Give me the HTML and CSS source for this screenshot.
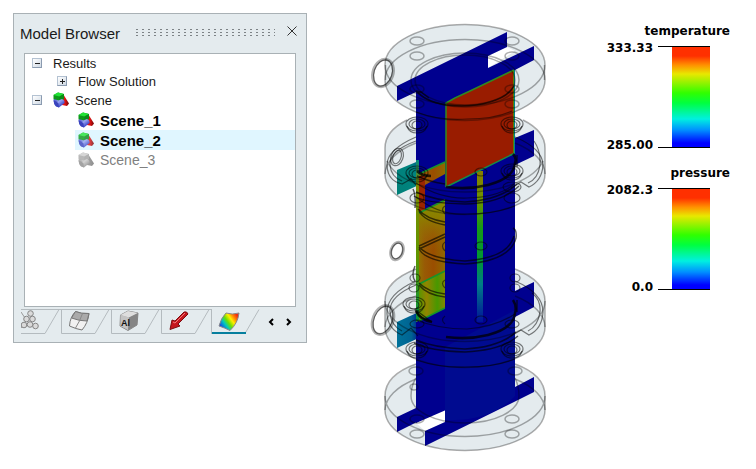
FILE: index.html
```
<!DOCTYPE html>
<html lang="en">
<head>
<meta charset="utf-8">
<title>Model Browser</title>
<link rel="stylesheet" href="styles.css">
</head>
<body>
<svg class="defs" aria-hidden="true">
  <defs>
    <linearGradient id="cyl" x1="0" y1="0" x2="1" y2="1"><stop offset="0" stop-color="#3a44c8"/><stop offset=".4" stop-color="#98a4f0"/><stop offset=".7" stop-color="#4a55cf"/><stop offset="1" stop-color="#2a33b0"/></linearGradient>
    <linearGradient id="cone" x1="0" x2="1"><stop offset="0" stop-color="#f01818"/><stop offset=".5" stop-color="#e01010"/><stop offset="1" stop-color="#6c0808"/></linearGradient>
  </defs>
  <symbol id="scene" viewBox="0 0 16 16">
    <path d="M11 3.500 16 11.500 14 14 9 13 8 6z" fill="url(#cone)"/>
    <path d="M.5 3 5 .5 11 2 11 7 6 9 .5 7.500z" fill="#0c9a1a"/>
    <path d="M.5 3 5 .5 11 2 6.500 4.500z" fill="#22e436"/>
    <path d="M6.500 4.500 11 2 11 7 6 9z" fill="#0c8a18"/>
    <path d="M.5 8.500Q1 6.500 3 7.500L5 8.500 9 7Q12 8 11.500 11L6 15.500 2 13.500z" fill="url(#cyl)"/>
    <path d="M.5 8.500Q4 9 5.500 11.500L6 15.500 3 14.500Q.5 12 .5 8.500z" fill="#3a43bd"/>
  </symbol>
</svg>

<main class="page">
  <section class="panel" aria-label="Model Browser">
    <header class="panel-head">
      <h1>Model Browser</h1>
      <span class="grip"></span>
      <button class="close" aria-label="Close"><svg viewBox="0 0 10 10"><path d="M.5.5 9.500 9.500M9.500.5.5 9.500"/></svg></button>
    </header>

    <ul class="tree">
      <li>
        <div class="row"><button class="toggle minus" aria-label="Collapse Results"></button><span>Results</span></div>
        <ul>
          <li class="row"><button class="toggle plus" aria-label="Expand Flow Solution"></button><span>Flow Solution</span></li>
        </ul>
      </li>
      <li>
        <div class="row tall"><button class="toggle minus" aria-label="Collapse Scene"></button><span class="entry"><svg class="icon"><use href="#scene"/></svg>Scene</span></div>
        <ul class="scenes">
          <li class="entry strong"><svg class="icon"><use href="#scene"/></svg>Scene_1</li>
          <li class="entry strong selected"><svg class="icon"><use href="#scene"/></svg>Scene_2</li>
          <li class="entry muted"><svg class="icon"><use href="#scene"/></svg>Scene_3</li>
        </ul>
      </li>
    </ul>

    <nav class="tabs">
      <button class="tab first" aria-label="Particles"><svg viewBox="10 0 40 25">
        <path class="edge" d="M10 .5H50M10 24.500H34L48 .5"/>
        <path d="M10 3 14 9M10 19 14 14" stroke="#999"/>
        <g fill="#dadada" stroke="#858585"><circle cx="19.500" cy="4.500" r="2.800"/><circle cx="15.500" cy="10" r="2.800"/><circle cx="21.500" cy="10" r="2.800"/><circle cx="13" cy="16" r="2.800"/><circle cx="19" cy="15.500" r="2.800"/><circle cx="24.500" cy="17" r="2.800"/></g>
      </svg></button>
      <button class="tab" aria-label="Mesh"><svg viewBox="0 0 50 25">
        <path class="edge" d="M0 .5H50M.5 0V24.500H34L48 .5"/>
        <path d="M14.500 2.500Q20 5 28 4.500Q27 14 21 21Q15 20 8.500 17Q9 8 14.500 2.500z" fill="#f1f1f1" stroke="#777"/>
        <path d="M14.500 2.500Q20 5 28 4.500L26 12Q18 12 10.500 9z" fill="#aaa" stroke="#777"/>
        <path d="M21.500 4.500Q19 12 14.500 19" fill="none" stroke="#888"/>
      </svg></button>
      <button class="tab" aria-label="Materials"><svg viewBox="0 0 50 25">
        <path class="edge" d="M0 .5H50M.5 0V24.500H34L48 .5"/>
        <path d="M9.500 6 17 2 27 4 26 16 17 21.500 9 17z" fill="#aaa" stroke="#888"/>
        <path d="M9.500 6 17 2 27 4 18 8.500z" fill="#dedede"/>
        <path d="M9.500 6 18 8.500 17 21 9.500 17z" fill="#c3c3c3"/>
        <path d="M18 8.500 27 4 26 16 17 21z" fill="#858585"/>
        <text class="cube-text" x="10" y="17">Al</text>
      </svg></button>
      <button class="tab" aria-label="Vectors"><svg viewBox="0 0 50 25">
        <path class="edge" d="M0 .5H50M.5 0V24.500H34L48 .5"/>
        <path d="M9 20.500 11 11 14 12 23 3Q26 2 27 5L17 15 19 17z" fill="#c5161d" stroke="#7d0c10"/>
        <path d="M12 13 14 14 24 4" fill="none" stroke="#f2777a"/>
      </svg></button>
      <button class="tab" aria-label="Contours"><svg viewBox="0 0 50 25">
        <defs><linearGradient id="rain" gradientUnits="userSpaceOnUse" x1="28" y1="6" x2="10" y2="19"><stop offset=".08" stop-color="#f02b10"/><stop offset=".25" stop-color="#ff8c00"/><stop offset=".4" stop-color="#ffee00"/><stop offset=".58" stop-color="#6ee000"/><stop offset=".75" stop-color="#00c8c0"/><stop offset="1" stop-color="#1735e8"/></linearGradient></defs>
        <path class="edge" d="M.5 0V25M34 24.500 48 .5"/>
        <path class="active-line" d="M1 24H35"/>
        <path d="M15 4Q21 6 28 4Q27 14 19 21.500Q14 19 8 17Q10 9 15 4z" fill="url(#rain)" stroke="#888"/>
      </svg></button>
      <button class="step" aria-label="Previous tabs"><svg viewBox="0 0 6 8"><path d="M5 1 2 4 5 7"/></svg></button>
      <button class="step" aria-label="Next tabs"><svg viewBox="0 0 6 8"><path d="M1 1 4 4 1 7"/></svg></button>
    </nav>
  </section>

  <figure class="view">
    <svg class="model" viewBox="370 15 190 445" role="img" aria-label="Flow model with temperature and pressure planes">
      <defs>
        <linearGradient id="streak" x1="0" y1="0" x2="0" y2="1"><stop offset="0" stop-color="#877f00"/><stop offset=".2" stop-color="#6b9400"/><stop offset=".38" stop-color="#169a18"/><stop offset=".6" stop-color="#009638"/><stop offset=".75" stop-color="#007d86"/><stop offset="1" stop-color="#00129a"/></linearGradient>
        <linearGradient id="orange"><stop offset="0" stop-color="#8f7e00"/><stop offset=".3" stop-color="#985a05"/><stop offset=".6" stop-color="#9a4e00"/><stop offset="1" stop-color="#906800"/></linearGradient>
        <linearGradient id="fade" x1="0" y1="0" x2="0" y2="1"><stop offset="0" stop-color="#859000"/><stop offset=".35" stop-color="#8d7d00"/><stop offset="1" stop-color="#98600a" stop-opacity="0"/></linearGradient>
        <linearGradient id="green"><stop offset="0" stop-color="#5a9500"/><stop offset=".3" stop-color="#928500"/><stop offset=".7" stop-color="#489800"/><stop offset="1" stop-color="#808800"/></linearGradient>
        <linearGradient id="rim" x1="0" y1="0" x2="0" y2="1"><stop offset="0" stop-color="#008a80"/><stop offset=".15" stop-color="#808c00"/><stop offset=".6" stop-color="#5f9600"/><stop offset="1" stop-color="#009440"/></linearGradient>
        <linearGradient id="teal" x1="0" y1="1" x2="1" y2="0"><stop offset="0" stop-color="#008078"/><stop offset=".7" stop-color="#008480"/><stop offset="1" stop-color="#004f92"/></linearGradient>
        <linearGradient id="lowteal"><stop offset="0" stop-color="#00729a"/><stop offset=".6" stop-color="#006392"/><stop offset="1" stop-color="#000d8e"/></linearGradient>
        <g id="holes"><ellipse cx="417" cy="41" rx="7" ry="4"/><ellipse cx="512" cy="41" rx="7" ry="4"/><ellipse cx="417" cy="56" rx="7" ry="4"/><ellipse cx="512" cy="56" rx="7" ry="4"/><ellipse cx="417" cy="89" rx="7" ry="4"/><ellipse cx="512" cy="89" rx="7" ry="4"/><ellipse cx="417" cy="104" rx="7" ry="4"/><ellipse cx="512" cy="104" rx="7" ry="4"/></g>
        <g id="bolt"><ellipse rx="11" ry="7"/><ellipse rx="8" ry="5"/><ellipse rx="5" ry="4" cy="1"/><path d="M-10 2Q-8 9 0 9Q8 9 10 2"/></g>
      </defs>

      <g class="body">
        <path d="M385 65a80 40.500 0 0 1 160 0v15a80 40.500 0 0 1-160 0z"/>
        <path d="M385 148a80 40.500 0 0 1 160 0v26a80 40.500 0 0 1-160 0z"/>
        <path d="M385 301a80 40.500 0 0 1 160 0v26a80 40.500 0 0 1-160 0z"/>
        <path d="M385 396a80 40.500 0 0 1 160 0v14a80 40.500 0 0 1-160 0z"/>
      </g>
      <path d="M488 56 507 47 515 51 488 68zM416 423 445 408V422L425 431z" fill="#fff"/>

      <path d="M397 170 421 160V184L397 195z" fill="url(#teal)"/>
      <path d="M397 322 421 311V337L397 348z" fill="url(#lowteal)"/>
      <path d="M397 417 416 408 445 400V408L397 432z" fill="#00008f"/>
      <path d="M397 86 507 32V47L488 56V68L534 46V60L515 70 446 104V170H416V92L397 101z" fill="#00008f"/>
      <path d="M416 95H446V410L416 423z" fill="#00008f"/>
      <path d="M416 176 445 162V308L416 322z" fill="url(#orange)"/>
      <path d="M418 176H425V209L418 212z" fill="#9b2600"/>
      <path d="M419 213 445 200V250H419z" fill="url(#fade)"/>
      <path d="M419 284 445 272V308L419 321z" fill="url(#green)"/>
      <path d="M416 160H419V320L416 322z" fill="url(#rim)"/>
      <path d="M419 213 445 200M419 284 445 271M419 321 445 308M419 174 445 162" fill="none" stroke="#16952b" stroke-width="1.500"/>
      <path d="M425 185 445 174V199L425 209z" fill="#00008f"/>

      <path d="M515 138 534 130V156L515 165z" fill="#00008f"/>
      <path d="M515 291 534 282V307L515 317z" fill="#00008f"/>
      <path d="M445 186 515 153V387L534 377V392L425 446V431L445 422z" fill="#00008f"/>
      <path d="M445 347 515 310V396Q490 422 445 420z" fill="#000b90"/>
      <path d="M477 171H483V322H477z" fill="url(#streak)"/>
      <path d="M446 103 513 70H515V153L446 187z" fill="#991c00"/>
      <path d="M446 187V103L455 98 470 91 514 70" fill="none" stroke="#2f8a20" stroke-width="1.500"/>
      <path d="M446 187 515 153" fill="none" stroke="#168c48" stroke-width="1.500"/>
      <path d="M514.500 70V153" stroke="#00838d"/><path d="M513.500 71V153" stroke="#5c7d00"/>

      <g class="line light">
        <ellipse cx="465" cy="65" rx="80" ry="40.500"/><ellipse cx="465" cy="80" rx="80" ry="40.500"/><path d="M385.500 65v15M544.500 65v15"/>
        <ellipse cx="465" cy="80" rx="54" ry="27"/><ellipse cx="465" cy="80" rx="50" ry="25"/>
        <use href="#holes"/>
        <path d="M407 120Q385 131 385 148v26a80 40.500 0 0 0 160 0v-26Q545 131 523 120"/>
        <path d="M387 161a80 40 0 0 0 156 0M385 174a80 40 0 0 1 31-31M545 174a80 40 0 0 0-30-31"/>
        <path d="M416 269Q385 281 385 301v26a80 40.500 0 0 0 160 0v-26Q545 281 515 269"/>
        <path d="M385 301a80 40.500 0 0 0 160 0M385 327a80 40 0 0 1 31-31M545 327a80 40 0 0 0-30-31"/>
        <path d="M416 364Q385 375 385 396v14a80 40.500 0 0 0 160 0v-14Q545 375 515 364"/>
        <path d="M385 396a80 40.500 0 0 0 160 0M385 410a80 40 0 0 1 31-31M545 410a80 40 0 0 0-30-31"/>
        <path d="M416 378Q411 386 411 396a54 27 0 0 0 108 0Q519 386 515 378"/>
        <ellipse cx="417" cy="419" rx="7" ry="4"/><ellipse cx="512" cy="419" rx="7" ry="4"/><ellipse cx="417" cy="434" rx="7" ry="4"/><ellipse cx="512" cy="434" rx="7" ry="4"/><ellipse cx="416" cy="371" rx="7" ry="4"/><ellipse cx="515" cy="371" rx="7" ry="4"/><ellipse cx="414" cy="387" rx="4" ry="3"/>
      </g>
      <g class="line mid">
        <path d="M416 137Q386 150 387 166Q388 181 402 184L411 179 416 185M515 137Q543 149 543 165Q542 181 529 187L521 182 511 188"/>
        <path d="M416 141Q389 151 390 165Q391 177 402 181M534 141Q541 151 540 165Q538 179 528 183"/>
        <path d="M416 281Q386 294 387 314Q388 329 402 335L411 328 418 336M515 281Q543 293 543 312Q542 329 529 335L521 330 511 336"/>
        <path d="M416 285Q389 296 390 312Q391 326 402 331M532 293Q541 300 540 312Q538 326 528 331"/>
        <use href="#bolt" x="417" y="124"/><use href="#bolt" x="512" y="124"/>
        <use href="#bolt" x="417" y="173"/><use href="#bolt" x="512" y="171"/>
        <use href="#bolt" x="414" y="304"/>
        <use href="#bolt" x="417" y="349"/><use href="#bolt" x="512" y="349"/>
        <ellipse cx="417" cy="324" rx="7" ry="4"/><ellipse cx="512" cy="324" rx="7" ry="4"/><ellipse cx="417" cy="198" rx="7" ry="5"/><ellipse cx="512" cy="198" rx="8" ry="5"/><ellipse cx="512" cy="187" rx="9" ry="5"/>
        <ellipse cx="415" cy="278" rx="5" ry="4"/><ellipse cx="515" cy="278" rx="5" ry="4"/><ellipse cx="414" cy="288" rx="5" ry="4"/><ellipse cx="515" cy="288" rx="5" ry="4"/>
        <ellipse cx="397" cy="157" rx="6" ry="9" transform="rotate(20 397 157)"/>
        <ellipse cx="397" cy="157" rx="4" ry="7" transform="rotate(20 397 157)"/>
        <path d="M416 112Q440 121 467 119Q495 119 512 111M416 183Q440 199 467 198Q500 197 514 184M416 197Q440 216 467 214Q495 214 515 206M416 320Q438 329 467 329Q495 327 515 314M416 360Q440 368 467 367Q495 367 515 359"/>
        <ellipse cx="481" cy="172" rx="6" ry="4"/><ellipse cx="481" cy="246" rx="6" ry="4"/><ellipse cx="481" cy="320" rx="6" ry="4"/>
        <path d="M445 206Q440 209 445 214M445 242Q440 246 445 251M445 280Q440 283 445 288M445 316Q440 320 445 324"/>
      </g>
      <g class="line halo">
        <ellipse cx="383" cy="73" rx="10" ry="14" transform="rotate(18 383 73)"/>
        <ellipse cx="383" cy="320" rx="10" ry="15" transform="rotate(22 383 320)"/>
        <ellipse cx="397" cy="251" rx="6" ry="9" transform="rotate(18 397 251)"/>
      </g>
      <g class="line mid">
        <ellipse cx="383" cy="73" rx="9" ry="13.500" transform="rotate(18 383 73)"/>
        <ellipse cx="383" cy="320" rx="9" ry="14.500" transform="rotate(22 383 320)"/>
        <ellipse cx="397" cy="251" rx="5.500" ry="8" transform="rotate(18 397 251)"/>
      </g>
      <g class="line dark">
        <path d="M416 91 421 92 429 98M417 91Q424 101 446 105Q470 108 490 102Q508 97 514 86"/>
        <path d="M419 249Q426 262 465 264Q510 261 516 238Q517 230 513 228M419 247Q430 259 465 261Q508 258 514 236M419 249 445 237M419 246 445 234"/>
        <path d="M419 211Q424 221 445 225M418 209Q426 219 445 222M419 285Q427 295 445 297M419 283Q428 292 445 294"/>
        <path d="M414 196Q424 203 465 204Q502 203 519 186M416 192Q435 201 465 202Q500 200 517 184"/>
        <path d="M414 343Q430 351 465 352Q502 350 518 336M416 340Q435 348 465 349Q500 347 516 332"/>
        <path d="M413 189Q416 195 415 208M415 266Q411 275 415 281M517 155v12M517 300v12M415 309Q417 317 430 321M417 311 432 322M417 176Q430 182 445 184"/>
      </g>
      <g class="line heavy">
        <path d="M446 187Q468 190 488 185Q514 178 515 163Q517 158 513 154"/>
        <path d="M446 337Q468 340 488 335Q514 328 515 313Q517 306 513 300"/>
        <path d="M417 171Q422 176 431 176M416 311Q420 320 432 322"/>
      </g>
    </svg>
  </figure>

  <aside class="legends">
    <section class="legend">
      <h2>temperature</h2>
      <div class="scale"><div class="values"><span>333.33</span><span>285.00</span></div><div class="ramp"></div></div>
    </section>
    <section class="legend">
      <h2>pressure</h2>
      <div class="scale"><div class="values"><span>2082.3</span><span>0.0</span></div><div class="ramp"></div></div>
    </section>
  </aside>
</main>
</body>
</html>
```
FILE: styles.css
```
* { box-sizing: border-box; }

body {
  margin: 0;
  background: #fff;
  color: #1a1a1a;
  font-family: "Liberation Sans", Arial, sans-serif;
  font-size: 13px;
}

button {
  padding: 0;
  border: 0;
  background: none;
  font: inherit;
}

svg { display: block; }
ul { margin: 0; padding: 0; list-style: none; }
h1, h2, figure { margin: 0; }

.defs { position: absolute; width: 0; height: 0; }

.page {
  display: grid;
  grid-template-columns: 41% 1fr auto;
  align-items: start;
  padding: 13px 26px 8px 13px;
}

/* Browser panel */
.panel {
  border: 1px solid #a9b1b5;
  background: #e4ebee;
  padding-bottom: 8px;
}

.panel-head {
  display: flex;
  align-items: center;
  height: 39px;
  padding: 0 9px 0 6px;
}

.panel-head h1 {
  font-size: 15px;
  font-weight: 400;
  line-height: 20px;
}

.grip {
  flex: 1;
  height: 8px;
  margin: 0 12px 2px 16px;
  background: conic-gradient(from 270deg at 2px 1px, #7d8386 90deg, transparent 0) 0 0 / 6px 3px;
}

.close { padding-bottom: 5px; }

.close svg {
  width: 10px;
  height: 10px;
  fill: none;
  stroke: #333;
}

.tree {
  min-height: 254px;
  margin: 0 10px;
  border: 1px solid #a9b1b5;
  background: #fff;
}

.row {
  display: flex;
  align-items: center;
  gap: 11px;
  height: 18px;
  padding-left: 7px;
}

.row.tall { height: 20px; }
ul ul .row { padding-left: 32px; }

.toggle {
  display: grid;
  place-items: center;
  width: 10px;
  height: 10px;
  border: 1px solid #b4c2d2;
  border-right-color: #8b9bb0;
  border-bottom-color: #8b9bb0;
  background: linear-gradient(135deg, #fff, #cfd9e4);
}

.toggle::before {
  content: "";
  width: 5px;
  height: 5px;
  background: linear-gradient(#222, #222) center / 5px 1px no-repeat;
}

.toggle.plus::before {
  background:
    linear-gradient(#222, #222) center / 5px 1px no-repeat,
    linear-gradient(#222, #222) center / 1px 5px no-repeat;
}

.entry {
  display: flex;
  align-items: center;
  gap: 6px;
  height: 20px;
}

.icon { width: 16px; height: 16px; }
.scenes { padding-left: 50px; }
.scenes .entry { padding-left: 3px; }
.strong { color: #000; font-size: 15px; font-weight: 700; }
.selected { background: #e0f6ff; }
.selected .icon { opacity: .8; }
.muted { color: #808080; font-size: 14px; }
.muted .icon { filter: grayscale(1); opacity: .5; }

.tabs {
  display: flex;
  align-items: center;
  padding: 2px 0 0 7px;
}

.tab svg { width: 50px; height: 25px; fill: none; }
.tab.first svg { width: 40px; }
.edge { fill: none; stroke: #b4bbbf; }
.active-line { stroke: #067f9e; stroke-width: 2px; }
.cube-text { fill: #111; font-size: 9px; font-weight: 700; }

.step { margin-left: 7px; }
.step + .step { margin-left: 12px; }
.step svg { width: 6px; height: 8px; fill: none; stroke: #000; stroke-width: 2px; }

/* Model view */
.view { padding: 2px 0 0 16px; }
.model { width: 190px; margin: 0 auto; }
.body { fill: #e4ebee; }
.line { fill: none; stroke: #000; }
.light { stroke-opacity: .32; stroke-width: 1.500px; }
.mid { stroke-opacity: .5; stroke-width: 1.200px; }
.halo { stroke-opacity: .3; stroke-width: 3px; }
.dark { stroke-opacity: .62; stroke-width: 1.500px; }
.heavy { stroke-opacity: .75; stroke-width: 2.500px; }

/* Colour scales */
.legends {
  display: grid;
  gap: 17px;
  padding-top: 10px;
  color: #000;
  font-family: "DejaVu Sans", Verdana, sans-serif;
  font-size: 12px;
  font-weight: 700;
  line-height: 16px;
}

.legend { display: grid; gap: 7px; }

.legend h2 {
  font-size: 12px;
  line-height: 16px;
  text-align: right;
}

.scale {
  display: flex;
  justify-content: flex-end;
  gap: 5px;
  padding-right: 20px;
}

.values {
  display: flex;
  flex-direction: column;
  justify-content: space-between;
  margin: -6px 0 -5px;
  text-align: right;
}

.ramp {
  width: 52px;
  height: 102px;
  border: solid #000;
  border-width: 1px 0;
  background: linear-gradient(#ff3000 9%, #ff9000 18%, #e8e800 27%, #30ff00 46%, #00ff40 56%, #00f0e0 72%, #0090ff 83%, #0000ff 96%) right / 38px 100% no-repeat;
}
```
